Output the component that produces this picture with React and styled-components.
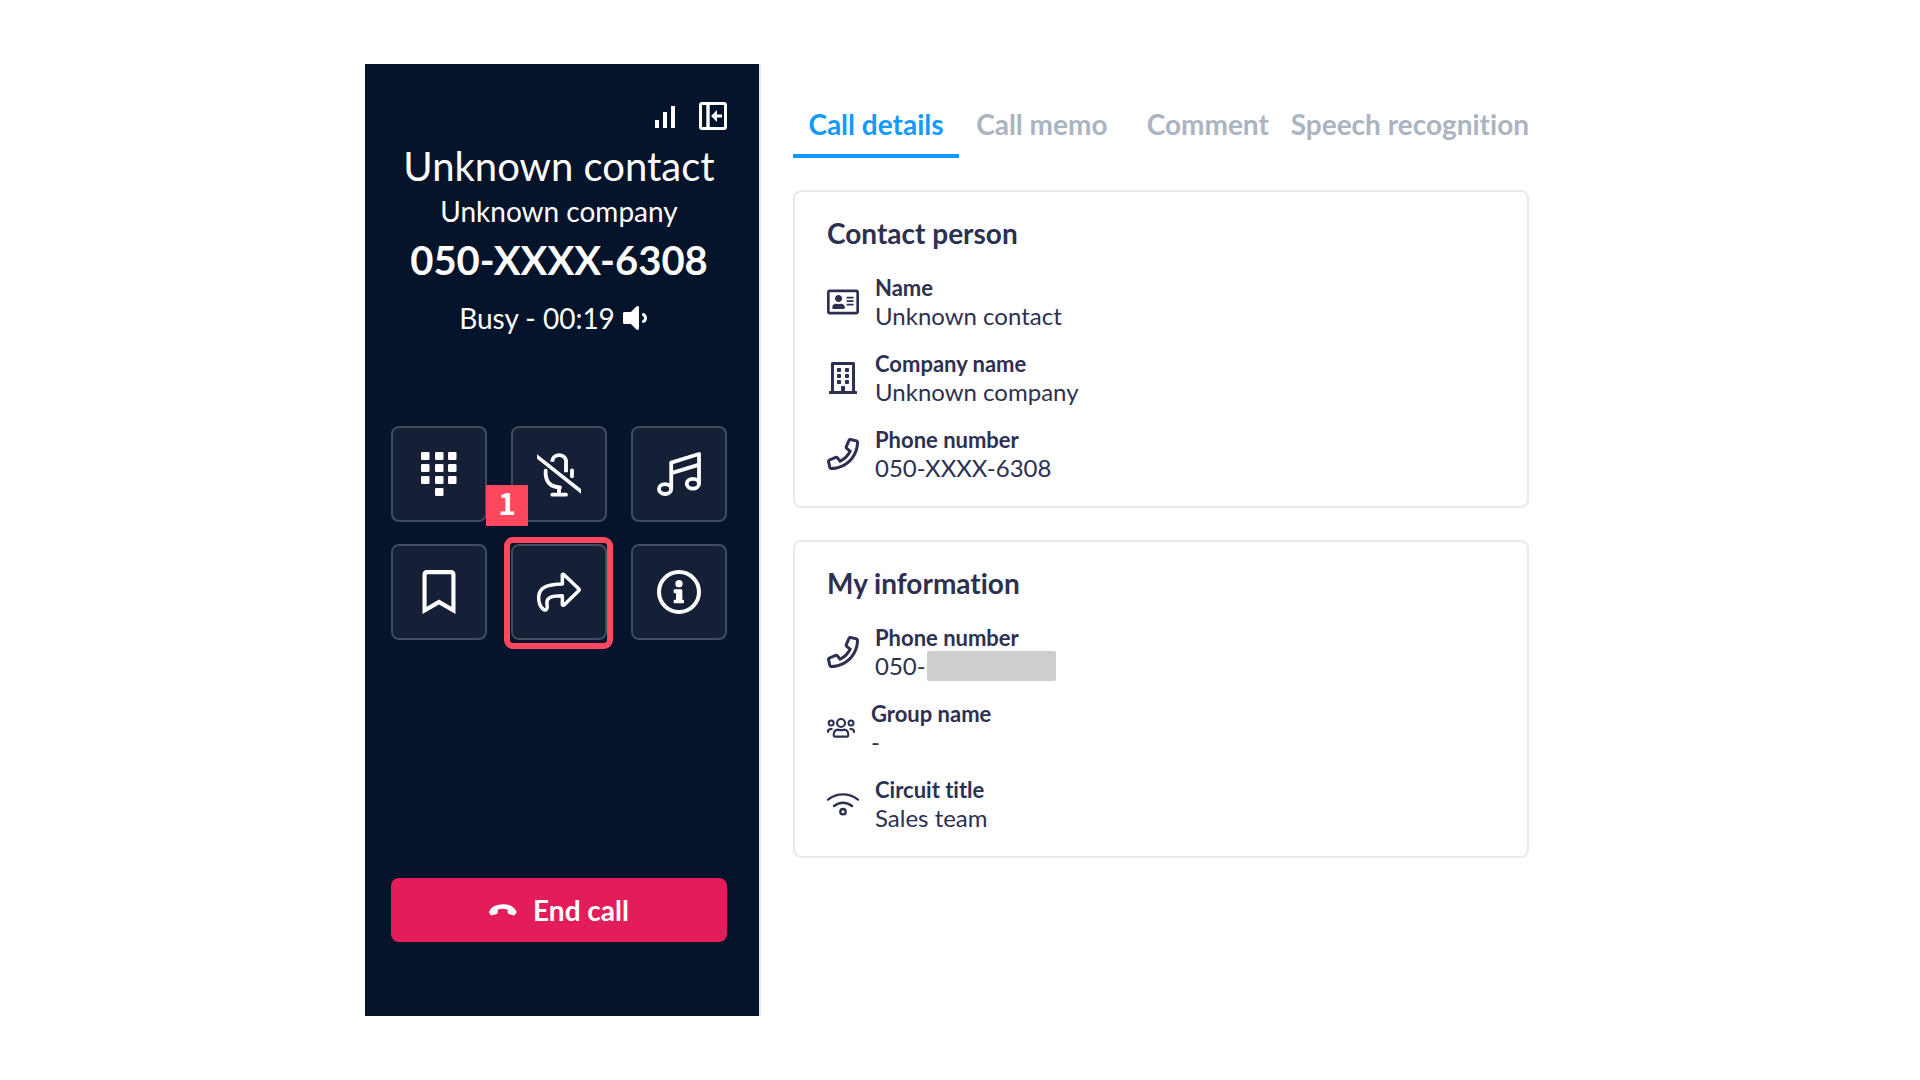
import React, { useState } from 'react';
import styled, { createGlobalStyle } from 'styled-components';
import { FaRegAddressCard, FaRegBookmark, FaRegBuilding, FaVolumeDown } from 'react-icons/fa';

const GlobalStyle = createGlobalStyle`
  * {
    box-sizing: border-box;
  }

  body {
    margin: 0;
    background: #fff;
    font-family: Lato, 'Liberation Sans', sans-serif;
    font-variant-ligatures: none;
  }

  button {
    font-family: inherit;
    font-variant-ligatures: inherit;
    cursor: pointer;
  }
`;

// Layout
const Page = styled.main`
  display: flex;
  max-width: 1190px;
  min-height: 100vh;
  margin: 0 auto;
  padding: 64px 0;
`;

const CallPanel = styled.aside`
  display: flex;
  flex-direction: column;
  flex: 0 0 396px;
  padding: 38px 32px 74px 26px;
  background: #05132b;
  border-right: 2px solid #e8e9f0;
  color: #fff;
`;

const DetailsPanel = styled.section`
  flex: 1;
  min-width: 0;
  padding: 43px 26px 0 32px;
  color: #2d3050;
`;

// Call panel
const Toolbar = styled.div`
  display: flex;
  justify-content: flex-end;
  align-items: center;
  gap: 24px;
`;

const ToolButton = styled.button`
  display: flex;
  padding: 0;
  border: none;
  background: none;
  color: inherit;
`;

const Caller = styled.header`
  display: flex;
  flex-direction: column;
  align-items: center;
  margin-top: 12px;
  text-align: center;
`;

const ContactName = styled.h1`
  margin: 0;
  font-size: 40px;
  font-weight: 400;
  line-height: 48px;
`;

const CompanyName = styled.p`
  margin: 4px 0 8px;
  font-size: 28px;
  line-height: 34px;
`;

const PhoneNumber = styled.p`
  margin: 0;
  font-size: 40px;
  font-weight: 700;
  line-height: 48px;
`;

const CallStatus = styled.p`
  display: flex;
  align-items: center;
  gap: 8px;
  margin: 17px 0 0;
  padding-right: 12px;
  font-size: 28px;
  line-height: 34px;

  svg {
    width: 24px;
  }
`;

const Keypad = styled.div`
  display: grid;
  grid-template-columns: repeat(3, 96px);
  justify-content: space-between;
  row-gap: 22px;
  margin: 91px 0 40px;
`;

const KeySlot = styled.div`
  position: relative;
`;

const KeyButton = styled.button`
  display: flex;
  align-items: center;
  justify-content: center;
  width: 100%;
  height: 96px;
  padding: 0;
  border: 2px solid #434c5e;
  border-radius: 8px;
  background: #152037;
  color: #fff;
`;

const Highlight = styled.span`
  position: absolute;
  inset: -7px -6px -9px -7px;
  border: 6px solid #ff475d;
  border-radius: 9px;
  pointer-events: none;
`;

const StepBadge = styled.span`
  position: absolute;
  top: -59px;
  left: -25px;
  width: 42px;
  padding-bottom: 7px;
  background: #ff475d;
  color: #fff;
  font-family: 'Noto Sans CJK JP', Lato, sans-serif;
  font-size: 30px;
  font-weight: 700;
  line-height: 34px;
  text-align: center;
`;

const EndCallButton = styled.button`
  display: flex;
  align-items: center;
  justify-content: center;
  gap: 16px;
  height: 64px;
  margin-top: auto;
  border: none;
  border-radius: 8px;
  background: #e21d59;
  color: #fff;
  font-size: 28px;
  font-weight: 700;
`;

// Details panel
const Tabs = styled.div`
  display: flex;
`;

const Tab = styled.button`
  flex: 1 1 0;
  padding: 0 0 13px;
  border: none;
  border-bottom: 4px solid ${props => (props.$active ? '#119aff' : 'transparent')};
  background: none;
  color: ${props => (props.$active ? '#119aff' : '#abb4c1')};
  font-size: 28px;
  font-weight: 700;
  line-height: 34px;
  white-space: nowrap;
`;

const Card = styled.section`
  margin-top: 32px;
  padding: 24px 32px;
  border: 2px solid #e8e9ed;
  border-radius: 8px;
`;

const CardTitle = styled.h2`
  margin: 0 0 24px;
  font-size: 28px;
  font-weight: 700;
  line-height: 34px;
`;

const FieldList = styled.dl`
  display: flex;
  flex-direction: column;
  gap: 20px;
  margin: 0;
`;

const Field = styled.div`
  display: flex;
  align-items: center;
  gap: 16px;
`;

const FieldLabel = styled.dt`
  font-size: 22px;
  font-weight: 700;
  line-height: 28px;
`;

const FieldValue = styled.dd`
  display: flex;
  align-items: center;
  height: 28px;
  margin: 0;
  font-size: 24px;
  line-height: 28px;
`;

const Redacted = styled.span`
  width: 129px;
  height: 30px;
  margin-left: 1px;
  border-radius: 2px;
  background: #d0cdce;
`;

// Icons
const SignalIcon = () => (
  <svg width="20" height="24" viewBox="0 0 20 24" fill="currentColor" role="img" aria-label="Signal strength">
    <path d="M0 16h4v8H0zM8 8h4v16H8zM16 2h4v22h-4z" />
  </svg>
);

const CollapseIcon = () => (
  <svg width="28" height="28" viewBox="0 0 28 28" fill="none" stroke="currentColor">
    <rect x="1.5" y="1.5" width="25" height="25" rx="1.5" strokeWidth="3" />
    <path d="M9 2v24" strokeWidth="3.4" />
    <path d="M15 14h8" strokeWidth="3" />
    <path d="M17 10.5 13.5 14l3.5 3.5z" fill="currentColor" strokeWidth="2" />
  </svg>
);

const DialpadIcon = () => (
  <svg width="36" height="44" viewBox="0 0 36 44" fill="currentColor">
    {[0, 12, 24].map(y =>
      [0, 14, 27].map(x => <rect key={`${x}-${y}`} x={x} y={y} width="8.5" height="8" rx="1.3" />)
    )}
    <rect x="14" y="36" width="8.5" height="8" rx="1.3" />
  </svg>
);

const MuteIcon = () => (
  <svg width="44" height="45" viewBox="471 125 132 135" fill="none" stroke="currentColor" strokeWidth="11.5">
    <path d="M517 154v-4a21 20 0 0 1 41 0v36" />
    <path d="M576 180v18" strokeLinecap="round" />
    <path d="M497 181c-2 34 14 49 43 50" strokeLinecap="round" />
    <path d="M537 228v22" />
    <path d="M517 253h41" strokeLinecap="round" />
    <path d="M471 132v13l132 105v-14z" fill="currentColor" stroke="none" />
  </svg>
);

const MusicIcon = () => (
  <svg width="44" height="44" viewBox="831 125 132 133" fill="none" stroke="currentColor" strokeWidth="11.5" strokeLinejoin="round">
    <path d="M873.5 237v-80l84-26v90" />
    <path d="m874 189 84-26" />
    <ellipse cx="855" cy="237" rx="18.5" ry="15" />
    <ellipse cx="939" cy="221" rx="18.5" ry="15" />
  </svg>
);

const TransferIcon = () => (
  <svg width="44" height="40" viewBox="471 485 132 120" fill="none" stroke="currentColor" strokeWidth="10.5" strokeLinejoin="round">
    <path d="M547 493q2-3 6 1l43 41q3 3 0 6l-43 42q-4 4-6 0v-27c-31 0-49 4-46 26 3 20-7 20-15 11-7-8-10-19-10-31 0-30 23-40 71-41z" />
  </svg>
);

const InfoIcon = () => (
  <svg width="44" height="44" viewBox="831 480 132 132" fill="currentColor">
    <circle cx="897" cy="546" r="60" fill="none" stroke="currentColor" strokeWidth="12" />
    <circle cx="897" cy="521" r="11" />
    <path d="M884 538h20q3 0 3 3v28h2q3 0 3 3v5q0 3-3 3h-25q-3 0-3-3v-5q0-3 3-3h4v-19h-4q-3 0-3-3v-6q0-3 3-3z" />
  </svg>
);

const HangUpIcon = () => (
  <svg width="28" height="12" viewBox="328 131 84 36" fill="currentColor">
    <path d="M328 155q4-12 18-19 24-9 48 0 13 7 17 18 0 3-2 5l-4 5q-2 2-5 1l-13-4q-3-1-3-5v-8q-15-5-30 0v8q0 4-3 5l-13 4q-3 1-5-1l-4-6q-1-1-1-3z" />
  </svg>
);

const PhoneIcon = () => (
  <svg width="32" height="32" viewBox="0 0 512 512" fill="currentColor">
    <path d="M476.5 22.9L382.3 1.2c-21.6-5-43.6 6.2-52.3 26.6l-43.5 101.5c-8 18.6-2.6 40.6 13.1 53.4l40 32.7C311 267.8 267.8 311 215.4 339.5l-32.7-40c-12.8-15.7-34.8-21.1-53.4-13.1L27.7 330c-20.4 8.7-31.5 30.7-26.6 52.3l21.7 94.1c4.8 20.9 23.2 35.5 44.6 35.5C312.3 512 512 313.7 512 67.5c0-21.4-14.6-39.8-35.5-44.6zM69.3 464l-20.9-90.7 98.2-42.1 55.7 68.1c98.8-46.4 150.6-98 197-197l-68.1-55.7 42.1-98.2L464 69.3C463 286.9 286.9 463 69.3 464z" />
  </svg>
);

const GroupIcon = () => (
  <svg width="28" height="20" viewBox="111 564 84 60" fill="none" stroke="currentColor" strokeWidth="6.5">
    <circle cx="153" cy="579" r="12" />
    <circle cx="123.5" cy="579" r="7.5" strokeWidth="6" />
    <circle cx="183" cy="579" r="7.5" strokeWidth="6" />
    <path d="M131 616c0-12 4-17 13-17 6 2 12 2 18 0 9 0 13 5 13 17q0 4-4 4h-36q-4 0-4-4z" />
    <path d="M113.5 608c0-8 3-11 9-11h5M192.500 608c0-8-3-11-9-11h-5" />
  </svg>
);

const WifiIcon = () => (
  <svg width="32" height="24" viewBox="111 784 96 72" fill="none" stroke="currentColor" strokeWidth="7" strokeLinecap="round">
    <path d="M114 807c28-21 62-21 90 0" />
    <path d="M132 826c16-13 38-13 54 0" />
    <circle cx="159" cy="843" r="8" />
  </svg>
);

const keys = [
  { label: 'Dial pad', icon: <DialpadIcon /> },
  { label: 'Mute', icon: <MuteIcon /> },
  { label: 'Hold', icon: <MusicIcon /> },
  { label: 'Bookmark', icon: <FaRegBookmark size={44} /> },
  { label: 'Transfer', icon: <TransferIcon />, step: 1 },
  { label: 'Information', icon: <InfoIcon /> }
];

const tabs = ['Call details', 'Call memo', 'Comment', 'Speech recognition'];

const contactFields = [
  { label: 'Name', value: 'Unknown contact', icon: <FaRegAddressCard size={32} /> },
  { label: 'Company name', value: 'Unknown company', icon: <FaRegBuilding size={32} /> },
  { label: 'Phone number', value: '050-XXXX-6308', icon: <PhoneIcon /> }
];

const myFields = [
  { label: 'Phone number', value: '050-', icon: <PhoneIcon />, redacted: true },
  { label: 'Group name', value: '-', icon: <GroupIcon /> },
  { label: 'Circuit title', value: 'Sales team', icon: <WifiIcon /> }
];

const InfoCard = ({ title, fields }) => (
  <Card>
    <CardTitle>{title}</CardTitle>
    <FieldList>
      {fields.map(field => (
        <Field key={field.label}>
          {field.icon}
          <div>
            <FieldLabel>{field.label}</FieldLabel>
            <FieldValue>
              {field.value}
              {field.redacted && <Redacted />}
            </FieldValue>
          </div>
        </Field>
      ))}
    </FieldList>
  </Card>
);

const App = () => {
  const [activeTab, setActiveTab] = useState(tabs[0]);

  return (
    <>
      <GlobalStyle />
      <Page>
        <CallPanel>
          <Toolbar>
            <SignalIcon />
            <ToolButton aria-label="Collapse panel">
              <CollapseIcon />
            </ToolButton>
          </Toolbar>

          <Caller>
            <ContactName>Unknown contact</ContactName>
            <CompanyName>Unknown company</CompanyName>
            <PhoneNumber>050-XXXX-6308</PhoneNumber>
            <CallStatus>
              Busy - 00:19
              <FaVolumeDown size={32} />
            </CallStatus>
          </Caller>

          <Keypad>
            {keys.map(key => (
              <KeySlot key={key.label}>
                <KeyButton aria-label={key.label}>{key.icon}</KeyButton>
                {key.step && (
                  <>
                    <Highlight />
                    <StepBadge>{key.step}</StepBadge>
                  </>
                )}
              </KeySlot>
            ))}
          </Keypad>

          <EndCallButton>
            <HangUpIcon />
            End call
          </EndCallButton>
        </CallPanel>

        <DetailsPanel>
          <Tabs role="tablist">
            {tabs.map(tab => (
              <Tab
                key={tab}
                role="tab"
                aria-selected={tab === activeTab}
                $active={tab === activeTab}
                onClick={() => setActiveTab(tab)}
              >
                {tab}
              </Tab>
            ))}
          </Tabs>

          <InfoCard title="Contact person" fields={contactFields} />
          <InfoCard title="My information" fields={myFields} />
        </DetailsPanel>
      </Page>
    </>
  );
};

export default App;
